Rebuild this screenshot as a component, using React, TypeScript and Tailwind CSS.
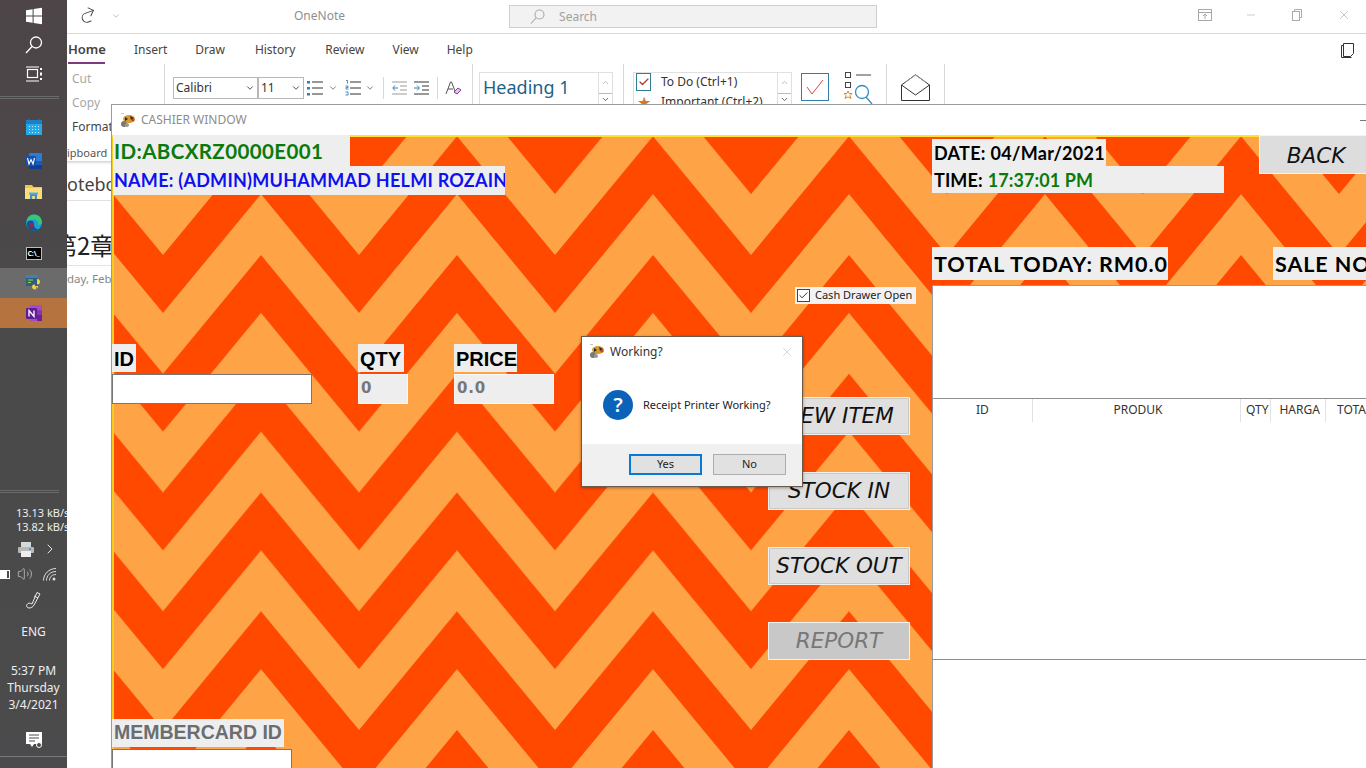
import React from "react";
import { Redo2, ChevronDown, ChevronUp, ChevronRight, X, Minus, Volume2, Check } from "lucide-react";

const tabs = ["Insert", "Draw", "History", "Review", "View", "Help"];
const tabGaps = ["ml-[28px]", "ml-[28px]", "ml-[30px]", "ml-[30px]", "ml-[28px]", "ml-[28px]"];

function Win() {
  return (
    <svg width="18" height="18" viewBox="0 0 18 18" fill="#fff">
      <path d="M1 3.2 7.6 2.2V8.4H1zM8.6 2 17 .8V8.4H8.6zM1 9.4H7.6V15.8L1 14.8zM8.6 9.4H17V17.2L8.6 16z" />
    </svg>
  );
}
function TaskView() {
  return (
    <svg width="18" height="16" viewBox="0 0 18 16" fill="none" stroke="#fff" strokeWidth="1.2">
      <rect x="2.5" y="3.5" width="10" height="8" />
      <path d="M1 1h13M1 15h13" />
      <path d="M16 2v2M16 6.5v3M16 12v2" strokeWidth="2" />
    </svg>
  );
}
function Calendar() {
  return (
    <svg width="16" height="16" viewBox="0 0 16 16">
      <rect x="0" y="1" width="16" height="15" fill="#29a8e8" />
      <rect x="0" y="1" width="16" height="4" fill="#1b7fc9" />
      <path d="M3 3.5 3 .5M13 3.5 13 .5" stroke="#1b7fc9" strokeWidth="2" />
      <path d="M3 7.5h10M3 10.5h10M3 13.5h10" stroke="#d5efff" strokeWidth="1" strokeDasharray="1 2" />
    </svg>
  );
}
function WordIcon() {
  return (
    <svg width="16" height="16" viewBox="0 0 16 16">
      <rect x="3" y="0" width="13" height="16" rx="1" fill="#2b7cd3" />
      <rect x="3" y="8" width="13" height="4" fill="#185abd" />
      <rect x="3" y="12" width="13" height="4" fill="#103f91" />
      <rect x="0" y="3" width="10" height="10" rx="1" fill="#1650ad" />
      <path d="M1.5 5 3 11 5 6.5 7 11 8.5 5" stroke="#fff" strokeWidth="1.1" fill="none" />
    </svg>
  );
}
function Folder() {
  return (
    <svg width="17" height="15" viewBox="0 0 17 15">
      <path d="M0 1h7l1.5 2H17v12H0z" fill="#f2c54a" />
      <rect x="0" y="4" width="17" height="11" fill="#fbdc7a" />
      <path d="M5 15v-5h7v5h-2.2v-3H7.200v3z" fill="#3d8fd0" />
      <rect x="4" y="8.500" width="9" height="2" fill="#5aa9e0" />
    </svg>
  );
}
function Edge() {
  return (
    <svg width="16" height="17" viewBox="0 0 16 17">
      <circle cx="8" cy="8.500" r="8" fill="#1b9de2" />
      <path d="M8 .5a8 8 0 0 1 8 8c0 1.500-2 2.500-4 2.500 1-3-1-5.500-4-5.500S2 7 1 8C1 4 4 .5 8 .5z" fill="#35c773" />
      <path d="M2 7c2-1 6-1 6 3 0 3 1 5 4 5.500C9 17.500 1 17 1 10c0-1 .3-2 1-3z" fill="#14509c" />
      <circle cx="5.500" cy="11" r="2.500" fill="#8a2f3a" />
    </svg>
  );
}
function Cmd() {
  return (
    <div className="flex h-[13px] w-[16px] items-center justify-center border border-[#bdbdbd] bg-black text-[7px] font-bold leading-none text-white">
      C:\_
    </div>
  );
}
function PyIcon() {
  return (
    <svg width="16" height="16" viewBox="0 0 16 16">
      <rect x="0" y="0" width="12" height="11" fill="#2f5f80" />
      <rect x="0" y="0" width="12" height="3" fill="#3f83a8" />
      <path d="M2 5h5M2 7.500h3" stroke="#9fd04a" strokeWidth="1.200" />
      <path d="M11 4c2.500 0 3 1.500 3 3s-1 2.500-3 2.500H9V11h3v.5c0 2-1.500 3-3 3s-3-1-3-2.500c0-2 1-2.500 3-2.500h2z" fill="#f0d050" />
      <circle cx="10.500" cy="13" r=".7" fill="#555" />
    </svg>
  );
}
function OneNoteIcon() {
  return (
    <svg width="16" height="16" viewBox="0 0 16 16">
      <rect x="4" y="0" width="12" height="16" rx="1" fill="#a44cc4" />
      <rect x="11" y="5" width="5" height="5" fill="#8a34b0" />
      <rect x="11" y="10" width="5" height="6" fill="#6a1e9a" />
      <rect x="0" y="3" width="11" height="11" rx="1" fill="#5f1c92" />
      <path d="M3 11.500v-6l5 6v-6" stroke="#fff" strokeWidth="1.300" fill="none" />
    </svg>
  );
}
function AppGlyph() {
  return (
    <svg width="16" height="15" viewBox="0 0 16 15">
      <ellipse cx="9" cy="6" rx="6" ry="4" fill="#d69a2d" />
      <path d="M5 4l3 2-3 2zM10 3l4 2-3 2z" fill="#2a2a2a" />
      <circle cx="13" cy="7" r="1.500" fill="#d0402a" />
      <circle cx="4" cy="11" r="3" fill="#7a7a72" />
      <circle cx="7" cy="12" r="2" fill="#9a9a90" />
      <path d="M1 0h3" stroke="#888" />
    </svg>
  );
}

function Taskbar() {
  return (
    <aside className="flex h-[768px] w-[67px] shrink-0 flex-col bg-gradient-to-b from-[#4d4548] via-[#4a4a4a] to-[#4b4a4c] text-white">
      <div className="flex h-[96px] flex-col items-center pt-[7px]">
        <Win />
        <svg className="mt-[11px]" width="18" height="18" viewBox="0 0 18 18" fill="none" stroke="#fff" strokeWidth="1.300">
          <circle cx="11" cy="6.500" r="5.500" />
          <path d="M7 10.500 1 17" />
        </svg>
        <div className="mt-[12px]"><TaskView /></div>
      </div>
      <div className="h-[3px] w-[59px] border-y border-[#6a6a6a]" />
      <div className="flex h-[31px] items-center justify-center pt-[25px]"><Calendar /></div>
      <div className="mt-[15px] flex h-[31px] items-center justify-center"><WordIcon /></div>
      <div className="flex h-[31px] items-center justify-center"><Folder /></div>
      <div className="flex h-[31px] items-center justify-center"><Edge /></div>
      <div className="flex h-[30px] items-center justify-center"><Cmd /></div>
      <div className="flex h-[30px] items-center justify-center bg-[#6b6b6b]"><PyIcon /></div>
      <div className="flex h-[30px] items-center justify-center bg-[#b4733f]"><OneNoteIcon /></div>
      <div className="mt-[162px] h-[3px] w-[59px] border-y border-[#6a6a6a]" />
      <div className="mt-[13px] whitespace-nowrap pl-[16px] font-['Noto_Sans',sans-serif] text-[11px] leading-[13.500px] text-[#eee]">
        <div>13.13 kB/s</div>
        <div>13.82 kB/s</div>
      </div>
      <div className="mt-[5px] flex h-[22px] items-center pl-[18px]">
        <svg width="16" height="15" viewBox="0 0 16 15">
          <rect x="3" y="0" width="10" height="5" fill="#d8d8d8" />
          <rect x="0" y="5" width="16" height="6" rx="1" fill="#b8b8b8" />
          <rect x="3" y="9" width="10" height="6" fill="#eee" />
          <circle cx="12" cy="7" r="1" fill="#2a8bd0" />
        </svg>
        <ChevronRight size={16} strokeWidth={1.300} className="ml-[8px]" />
      </div>
      <div className="mt-[4px] flex h-[20px] items-center">
        <div className="flex h-[9px] w-[10px] items-center border-y border-r border-white">
          <div className="h-[7px] w-[7px] bg-white" />
        </div>
        <Volume2 size={16} strokeWidth={1} className="ml-[7px] text-[#ddd]" />
        <svg className="ml-[10px]" width="14" height="13" viewBox="0 0 14 13" fill="none" stroke="#ddd" strokeWidth="1">
          <path d="M.5 12.500C.5 6 6 .5 13 .5M3.500 12.500C3.500 7.500 7.500 3.500 13 3.500M6.500 12.500C6.500 9 9 6.500 13 6.500" />
          <circle cx="11" cy="11" r="1.500" fill="#ddd" stroke="none" />
        </svg>
      </div>
      <div className="mt-[7px] flex h-[18px] justify-center">
        <svg width="17" height="18" viewBox="0 0 17 18" fill="none" stroke="#eee" strokeWidth="1">
          <path d="M7 13 12 1.500l3 1.500-6 11c-1 2-3 3-5 3s-3-2-2-3.500 3-2 5-.5z" />
          <path d="M9 5l4 2" />
        </svg>
      </div>
      <div className="mt-[15px] text-center font-['Noto_Sans',sans-serif] text-[12px] leading-[15px] text-[#eee]">ENG</div>
      <div className="mt-[23px] whitespace-nowrap text-center font-['Noto_Sans',sans-serif] text-[12px] leading-[17px] text-[#eee]">
        <div>5:37 PM</div>
        <div>Thursday</div>
        <div>3/4/2021</div>
      </div>
      <div className="mt-[19px] flex justify-center">
        <svg width="16" height="16" viewBox="0 0 16 16">
          <path d="M0 0h16v12H8l-2 3-2-3H0z" fill="#fff" />
          <path d="M3 3h10M3 6h10M3 9h6" stroke="#4a4a4a" />
          <circle cx="13" cy="13" r="2.500" fill="#4a4a4a" stroke="#fff" />
        </svg>
      </div>
      <div className="mt-[8px] h-px w-full bg-[#777]" />
    </aside>
  );
}

function Combo({ w, label }: { w: string; label: string }) {
  return (
    <div className={`flex h-[22px] ${w} items-center justify-between border border-[#b8b8b8] bg-white pl-[2px] pr-[2px] text-[12px] text-[#333]`}>
      <span>{label}</span>
      <ChevronDown size={10} strokeWidth={2} />
    </div>
  );
}
function Sep({ h = "h-[26px]", cls = "" }: { h?: string; cls?: string }) {
  return <div className={`${h} w-px shrink-0 bg-[#d8d8d8] ${cls}`} />;
}
function ListIcon({ numbered }: { numbered?: boolean }) {
  return (
    <svg width="16" height="16" viewBox="0 0 16 16">
      <path d="M5 2h11M5 8h11M5 14h11" stroke="#333" strokeWidth="1" />
      {numbered ? (
        <path d="M1 .5h1.500v3M.5 6h2.500v1.500H1v1.500h2.500M.5 12h2.500v3H.5" stroke="#2a82c0" strokeWidth=".9" fill="none" />
      ) : (
        <path d="M0 1h3v2.500H0zM0 7h3v2.500H0zM0 13h3v2.500H0z" fill="#2a82c0" />
      )}
    </svg>
  );
}
function Indent({ out }: { out?: boolean }) {
  return (
    <svg width="15" height="14" viewBox="0 0 15 14" fill="none" strokeWidth="1">
      <path d="M0 1h15M8 5h7M8 9h7M0 13h15" stroke={out ? "#9a9a9a" : "#333"} />
      <path d={out ? "M6 7H1M3 4.500 .8 7 3 9.500" : "M0 7h5M3 4.500 5.500 7 3 9.500"} stroke="#2a82c0" />
    </svg>
  );
}

function OneNote() {
  return (
    <main className="flex min-w-0 flex-1 flex-col overflow-hidden bg-white font-['Noto_Sans',sans-serif]">
      <header className="flex h-[34px] shrink-0 items-center border-b border-[#d9d9d9]">
        <Redo2 size={20} strokeWidth={1.200} className="ml-[11px] mb-[3px] rotate-[-20deg] text-[#444]" />
        <ChevronDown size={10} strokeWidth={1.500} className="ml-[13px] mb-[2px] text-[#999]" />
        <span className="ml-[173px] mb-[2px] text-[12px] text-[#8f8f8f]">OneNote</span>
        <div className="ml-[164px] flex h-[23px] w-[368px] items-center border border-[#cfcfcf] bg-[#f2f2f2] pl-[20px] text-[12px] text-[#a0a0a0]">
          <svg width="15" height="15" viewBox="0 0 15 15" fill="none" stroke="#aaa" strokeWidth="1.100">
            <circle cx="9.500" cy="5.500" r="4.500" />
            <path d="M6 9 1 14.500" />
          </svg>
          <span className="ml-[14px] pt-[1px]">Search</span>
        </div>
        <svg className="ml-[321px] mb-[3px]" width="14" height="12" viewBox="0 0 14 12" fill="none" stroke="#a8a8a8">
          <rect x=".5" y=".5" width="13" height="11" />
          <path d="M.5 3.500h13M7 10V5M5 7l2-2 2 2" />
        </svg>
        <Minus size={12} strokeWidth={1} className="ml-[33px] mb-[3px] text-[#999]" />
        <svg className="ml-[35px] mb-[3px]" width="10" height="12" viewBox="0 0 10 12" fill="none" stroke="#aaa">
          <rect x=".5" y="2.500" width="7" height="9" />
          <path d="M2.500 2.500V.5h7v8h-2" />
        </svg>
        <X size={14} strokeWidth={1} className="ml-[35px] mb-[3px] text-[#999]" />
      </header>

      <nav className="flex h-[30px] shrink-0 items-center pt-[1px] text-[12px] text-[#444]">
        <div className="relative ml-[1px] flex h-full items-center text-[13px] font-semibold text-[#444]">
          <span>Home</span>
          <div className="absolute bottom-[0px] left-0 h-[2.500px] w-[37px] bg-[#80397b]" />
        </div>
        {tabs.map((t, i) => (
          <span key={t} className={tabGaps[i]}>{t}</span>
        ))}
        <svg className="ml-auto mr-[11px]" width="15" height="16" viewBox="0 0 15 16" fill="none" stroke="#333">
          <path d="M3.500 1.500h10v10l-3 3h-7zM3 3.500H1.500v12h10" />
        </svg>
      </nav>

      <section className="flex h-[98px] shrink-0 overflow-hidden border-b border-[#d8d8d8] shadow-[0_1px_2px_#ddd]">
        <div className="w-[97px] shrink-0 pl-[5px] text-[12px] leading-[24px]">
          <div className="mt-[3px] text-[#a8a8a8]">Cut</div>
          <div className="text-[#a8a8a8]">Copy</div>
          <div className="text-[#444]">Format</div>
          <div className="-ml-[5px] mt-[2px] text-[11px] text-[#555]">ipboard</div>
        </div>
        <Sep h="h-[40px]" />
        <div className="ml-[8px] mt-[13px] flex h-[22px] items-center">
          <Combo w="w-[85px]" label="Calibri" />
          <Combo w="w-[46px]" label="11" />
          <div className="ml-[3px]"><ListIcon /></div>
          <ChevronDown size={10} strokeWidth={1.500} className="ml-[5px] text-[#333]" />
          <div className="ml-[7px]"><ListIcon numbered /></div>
          <ChevronDown size={10} strokeWidth={1.500} className="ml-[4px] text-[#333]" />
          <Sep h="h-[22px]" cls="ml-[8px]" />
          <div className="ml-[8px]"><Indent out /></div>
          <div className="ml-[7px]"><Indent /></div>
          <Sep h="h-[22px]" cls="ml-[8px]" />
          <svg className="ml-[7px]" width="16" height="16" viewBox="0 0 16 16" fill="none">
            <path d="M1 14 5.500 2h1L10 11M3 9h5" stroke="#555" />
            <path d="M9 12l4-4 3 2-4 4z" fill="#e0c5e8" stroke="#8a3c9a" />
          </svg>
        </div>
        <Sep h="h-[40px]" cls="ml-[11px]" />
        <div className="ml-[6px] mt-[8px] flex h-[35px] w-[134px] shrink-0 border border-[#e0e0e0]">
          <div className="flex-1 whitespace-nowrap pl-[3px] text-[18px] leading-[28px] text-[#1f5f8b]">Heading 1</div>
          <div className="flex w-[14px] flex-col border-l border-[#e0e0e0]">
            <div className="flex h-[21px] items-center justify-center"><ChevronUp size={9} className="text-[#aaa]" /></div>
            <div className="flex h-[14px] items-center justify-center border-t border-[#bbb]"><ChevronDown size={9} className="text-[#333]" /></div>
          </div>
        </div>
        <Sep h="h-[40px]" cls="ml-[10px]" />
        <div className="ml-[9px] mt-[8px] flex h-[35px] w-[159px] shrink-0 overflow-hidden border border-[#e0e0e0]">
          <div className="flex-1 text-[12px] leading-[20px] text-[#333]">
            <div className="-mt-[1px] flex items-center pl-[2px]">
              <div className="flex h-[18px] w-[15px] items-center justify-center border border-[#2d7d95]"><Check size={12} strokeWidth={2.500} className="text-[#b03a2e]" /></div>
              <span className="ml-[10px] whitespace-nowrap">To Do (Ctrl+1)</span>
            </div>
            <div className="flex items-center pl-[2px]">
              <span className="w-[15px] text-center text-[16px] leading-[20px] text-[#d4792c]">★</span>
              <span className="ml-[10px] whitespace-nowrap">Important (Ctrl+2)</span>
            </div>
          </div>
          <div className="flex w-[14px] flex-col border-l border-[#e0e0e0]">
            <div className="flex h-[21px] items-center justify-center"><ChevronUp size={9} className="text-[#aaa]" /></div>
            <div className="flex h-[14px] items-center justify-center border-t border-[#bbb]"><ChevronDown size={9} className="text-[#333]" /></div>
          </div>
        </div>
        <div className="ml-[9px] mt-[9px] flex h-[28px] w-[28px] shrink-0 items-center justify-center border border-[#2f7ea8]">
          <svg width="18" height="16" viewBox="0 0 18 16" fill="none" stroke="#e0474c" strokeWidth="1">
            <path d="M1 8l5 7L17 1" />
          </svg>
        </div>
        <svg className="ml-[15px] mt-[8px] shrink-0" width="30" height="32" viewBox="0 0 30 32" fill="none">
          <rect x="1.500" y=".5" width="5" height="5" stroke="#444" />
          <rect x="1.500" y="10.500" width="5" height="5" stroke="#444" />
          <path d="M12 3h15" stroke="#444" />
          <path d="M4 19l1.200 2.500H8l-2 2 1 3-3-1.700L1 26.500l1-3-2-2h2.800z" stroke="#d98a2b" />
          <circle cx="18" cy="20" r="6.500" stroke="#2f8ec0" strokeWidth="1.300" />
          <path d="M22 25l6 7" stroke="#2f8ec0" strokeWidth="1.300" />
        </svg>
        <Sep h="h-[40px]" cls="ml-[12px]" />
        <svg className="ml-[14px] mt-[10px] shrink-0" width="29" height="27" viewBox="0 0 29 27" fill="none" stroke="#333">
          <path d="M.5 11 14.500 .7 28.500 11v15.500H.5z" />
          <path d="M.5 11l14 10 14-10" />
          <path d="M4 8.500 14.500 1 25 8.500" stroke="#999" />
        </svg>
        <Sep h="h-[40px]" cls="ml-[14px]" />
      </section>

      <div className="h-[38px] w-[44px] shrink-0 overflow-hidden whitespace-nowrap text-[18px] leading-[44px] text-[#444]">oteboo</div>
      <div className="h-px w-full bg-[#e2e2e2]" />
      <div className="-ml-[14px] mt-[26px] w-[60px] overflow-hidden whitespace-nowrap font-['Noto_Sans_CJK_JP','Noto_Sans',sans-serif] text-[24px] leading-[36px] text-[#222]">第2章</div>
      <div className="mt-[2px] w-full border-t border-[#e4e4e4] pt-[3px] text-[11.500px] text-[#888]">
        <div className="w-[44px] overflow-hidden whitespace-nowrap pt-[1px]">day, Feb</div>
      </div>
    </main>
  );
}

const comic = "font-['Lato',sans-serif]";
const btnFont = "font-['DejaVu_Sans',sans-serif]";

function Tag({ cls, children }: { cls: string; children: React.ReactNode }) {
  return <div className={`flex shrink-0 items-center overflow-hidden whitespace-nowrap bg-[#eeeeee] ${cls}`}>{children}</div>;
}
function ActionBtn({ label, muted }: { label: string; muted?: boolean }) {
  return (
    <div
      className={`flex h-[38px] w-[142px] items-center justify-center border border-[#f1f1f1] pt-[2px] text-[21.500px] italic shadow-[inset_0_0_0_1px_#c9c9c9] ${btnFont} ${
        muted ? "bg-[#c8c8c8] text-[#777]" : "bg-[#e0e0e0] text-[#111]"
      }`}
    >
      {label}
    </div>
  );
}

function Pattern() {
  return (
    <svg className="absolute inset-0 h-full w-full" aria-hidden="true">
      <defs>
        <pattern id="zig" width="196" height="118.750" patternUnits="userSpaceOnUse" patternTransform="translate(51 1.250)">
          <rect width="196" height="118.750" fill="#ffa347" />
          {[0, 118.75, 237.5].map((Y) => (
            <polygon
              key={Y}
              fill="#ff4800"
              points={`0,${Y} 98,${Y - 118.75} 196,${Y} 196,${Y + 58} 98,${Y - 60.75} 0,${Y + 58}`}
            />
          ))}
        </pattern>
      </defs>
      <rect width="100%" height="100%" fill="url(#zig)" />
    </svg>
  );
}

function Cashier() {
  return (
    <section className="absolute left-[111px] top-[104px] flex h-[664px] w-[1255px] flex-col overflow-hidden border-l border-t border-[#9a9a9a] bg-white font-['Noto_Sans',sans-serif]">
      <div className="flex h-[30px] shrink-0 items-center pl-[8px]">
        <AppGlyph />
        <span className="ml-[5px] text-[12px] text-[#8c8c8c]">CASHIER WINDOW</span>
        <div className="ml-auto mr-0 h-px w-[6px] bg-[#777]" />
      </div>
      <div className="relative flex flex-1 overflow-hidden pl-[1px]">
        <Pattern />
        <div className="absolute left-0 top-0 h-full w-[2px] bg-[#f4cc1c]" />
        <div className="absolute left-0 right-0 top-0 h-[2px] bg-[#ffe22e]" />

        <div className="relative flex w-[819px] shrink-0 flex-col">
          <Tag cls={`h-[31px] w-[237px] pl-[1px] pt-[2px] text-[20.500px] font-bold tracking-[0.400px] text-[#0a7a0a] ${comic}`}>ID:ABCXRZ0000E001</Tag>
          <Tag cls={`h-[29px] w-[392px] pl-[1px] text-[18px] font-bold tracking-[0.250px] text-[#1010ee] ${comic}`}>NAME: (ADMIN)MUHAMMAD HELMI ROZAIN</Tag>

          <div className="ml-[682px] mt-[92px] flex h-[21px] w-[121px] items-center bg-[#f2f2f2] pl-[2px] text-[11px] text-[#222]">
            <div className="flex h-[13px] w-[13px] items-center justify-center border border-[#444] bg-white">
              <Check size={11} strokeWidth={2} className="text-[#222]" />
            </div>
            <span className="ml-[5px] whitespace-nowrap">Cash Drawer Open</span>
          </div>

          <div className="mt-[40px] flex">
            <div className="flex w-[655px] shrink-0 font-['Liberation_Sans',sans-serif]">
              <div className="-ml-px flex w-[246px] flex-col">
                <Tag cls="h-[28px] w-[24px] pl-[2px] pt-[2px] text-[20px] font-bold text-black">ID</Tag>
                <div className="mt-[2px] h-[30px] w-[200px] border border-[#777] bg-white" />
              </div>
              <div className="flex w-[96px] flex-col">
                <Tag cls="h-[28px] w-[46px] pl-[2px] pt-[2px] text-[20px] font-bold text-black">QTY</Tag>
                <div className="mt-[2px] flex h-[30px] w-[50px] items-center border border-[#f8f8f8] bg-[#eeeeee] pl-[2px] font-['DejaVu_Sans',sans-serif] text-[15px] font-bold text-[#777]">0</div>
              </div>
              <div className="flex flex-col">
                <Tag cls="h-[28px] w-[63px] pl-[2px] pt-[2px] text-[20px] font-bold text-black">PRICE</Tag>
                <div className="mt-[2px] flex h-[30px] w-[100px] items-center border border-[#f8f8f8] bg-[#eeeeee] pl-[2px] font-['DejaVu_Sans',sans-serif] text-[15px] font-bold tracking-[0.800px] text-[#777]">0.0</div>
              </div>
            </div>
            <div className="mt-[53px] flex flex-col gap-[37px]">
              <ActionBtn label="NEW ITEM" />
              <ActionBtn label="STOCK IN" />
              <ActionBtn label="STOCK OUT" />
              <ActionBtn label="REPORT" muted />
            </div>
          </div>

          <Tag cls="-ml-px mt-[59px] h-[28px] w-[172px] pl-[2px] pt-[1px] font-['Liberation_Sans',sans-serif] text-[19.500px] font-bold text-[#6a6e72]">MEMBERCARD ID</Tag>
          <div className="-ml-px mt-[2px] h-[30px] w-[180px] shrink-0 border border-[#777] bg-white" />
        </div>

        <div className="relative flex min-w-0 flex-1 flex-col">
          <div className="flex">
            <div className="flex w-[327px] shrink-0 flex-col pt-[4px]">
              <Tag cls={`h-[27px] w-[174px] pl-[2px] pt-[2px] text-[18px] font-bold tracking-[0.300px] text-black ${comic}`}>DATE: 04/Mar/2021</Tag>
              <Tag cls={`h-[27px] w-[292px] pl-[2px] pt-[1px] text-[18px] font-bold tracking-[0.100px] text-black ${comic}`}>
                TIME:<span className="ml-[5px] text-[#0a7a0a]">17:37:01 PM</span>
              </Tag>
            </div>
            <div className={`flex h-[39px] w-[110px] shrink-0 items-center justify-center border border-[#f4f4f4] bg-[#dddddd] pl-[4px] pt-[3px] text-[21.500px] italic text-[#111] ${btnFont}`}>BACK</div>
          </div>
          <div className="mt-[54px] flex h-[33px] shrink-0 justify-between">
            <Tag cls={`w-[236px] pl-[2px] pt-[2px] text-[21.500px] font-bold tracking-[0.900px] text-black ${comic}`}>TOTAL TODAY: RM0.0</Tag>
            <Tag cls={`w-[93px] pl-[2px] pt-[2px] text-[21.500px] font-bold tracking-[0.900px] text-black ${comic}`}>SALE NO</Tag>
          </div>
          <div className="mt-[5px] flex flex-1 flex-col border-l border-t border-[#9a9a9a] bg-white">
            <div className="h-[112px] shrink-0" />
            <div className="flex h-[24px] shrink-0 border-t border-[#8e8e8e] text-center text-[12px] leading-[22px] text-[#333]">
              <div className="w-[100px] border-r border-[#e2e2e2]">ID</div>
              <div className="w-[209px] border-r border-[#e2e2e2] pl-[3px]">PRODUK</div>
              <div className="w-[30px] border-r border-[#e2e2e2] pl-[3px] whitespace-nowrap">QTY</div>
              <div className="w-[55px] border-r border-[#e2e2e2] pl-[3px] whitespace-nowrap">HARGA</div>
              <div className="w-[40px] overflow-hidden whitespace-nowrap pl-[11px] text-left">TOTAL</div>
            </div>
            <div className="h-[238px] shrink-0 border-b border-[#8e8e8e]" />
          </div>
        </div>
      </div>
    </section>
  );
}

function Dialog() {
  return (
    <div className="absolute left-[581px] top-[336px] flex h-[151px] w-[222px] flex-col border border-[#6b5a4a] bg-white font-['Noto_Sans',sans-serif] shadow-[0_1px_3px_rgba(0,0,0,0.35)]">
      <div className="flex h-[29px] shrink-0 items-center pl-[7px]">
        <AppGlyph />
        <span className="ml-[5px] text-[12px] text-[#333]">Working?</span>
        <X size={14} strokeWidth={1} className="ml-auto mr-[8px] text-[#bbb]" />
      </div>
      <div className="flex h-[78px] shrink-0 items-center pl-[21px]">
        <div className="flex h-[30px] w-[30px] items-center justify-center rounded-full bg-[#0a63b8] text-[20px] font-semibold text-white">?</div>
        <span className="ml-[10px] whitespace-nowrap text-[11px] text-[#222]">Receipt Printer Working?</span>
      </div>
      <div className="flex flex-1 justify-end gap-[11px] bg-[#f0f0f0] pr-[16px] pt-[10px] text-[11px] text-[#222]">
        <div className="flex h-[21px] w-[73px] items-center justify-center border-2 border-[#0a78d4] bg-[#e1e1e1]">Yes</div>
        <div className="flex h-[21px] w-[73px] items-center justify-center border border-[#adadad] bg-[#e1e1e1]">No</div>
      </div>
    </div>
  );
}

export default function App() {
  return (
    <div className="relative flex h-[768px] w-[1366px] overflow-hidden bg-white">
      <Taskbar />
      <OneNote />
      <Cashier />
      <Dialog />
    </div>
  );
}
